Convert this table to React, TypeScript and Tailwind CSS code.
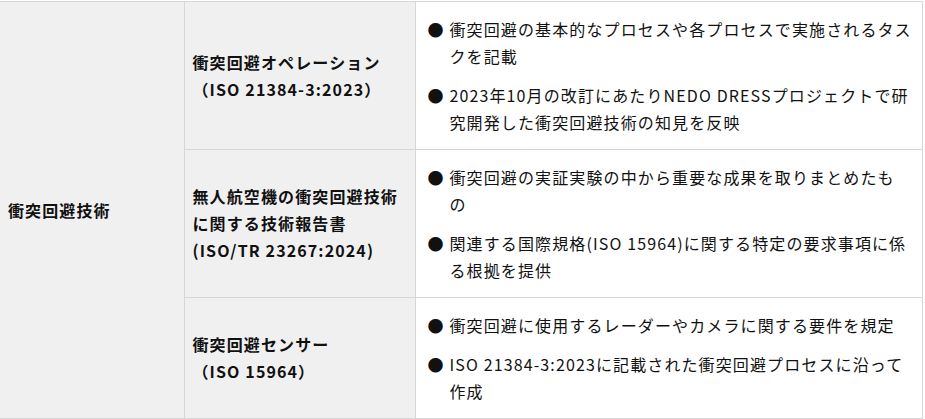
const rows = [
  {
    title: ["衝突回避オペレーション", "（ISO 21384-3:2023）"],
    items: [
      ["衝突回避の基本的なプロセスや各プロセスで実施されるタス", "クを記載"],
      ["2023年10月の改訂にあたりNEDO DRESSプロジェクトで研", "究開発した衝突回避技術の知見を反映"],
    ],
  },
  {
    title: ["無人航空機の衝突回避技術", "に関する技術報告書", "(ISO/TR 23267:2024)"],
    items: [
      ["衝突回避の実証実験の中から重要な成果を取りまとめたも", "の"],
      ["関連する国際規格(ISO 15964)に関する特定の要求事項に係", "る根拠を提供"],
    ],
  },
  {
    title: ["衝突回避センサー", "（ISO 15964）"],
    items: [
      ["衝突回避に使用するレーダーやカメラに関する要件を規定"],
      ["ISO 21384-3:2023に記載された衝突回避プロセスに沿って", "作成"],
    ],
  },
];

export default function App() {
  return (
    <div className="w-[925px] h-[419px] bg-white pt-px font-['Noto_Sans_CJK_JP',sans-serif] text-[16px] leading-[27px] tracking-[0.07em] text-[#111]">
      <table className="w-[922px] border-collapse table-fixed">
        <colgroup>
          <col className="w-[184px]" />
          <col className="w-[231px]" />
          <col className="w-[507px]" />
        </colgroup>
        <tbody>
          {rows.map((row, i) => (
            <tr key={i}>
              {i === 0 && (
                <th
                  rowSpan={3}
                  className="bg-[#f0f0f0] border-t border-b border-r border-[#d6d6d6] px-2 text-left align-middle font-bold"
                >
                  衝突回避技術
                </th>
              )}
              <th className="bg-[#f0f0f0] border border-[#d6d6d6] pl-2 pr-1 text-left align-middle font-bold">
                {row.title.map((t, j) => (
                  <div key={j} className="whitespace-nowrap">{t}</div>
                ))}
              </th>
              <td className="border border-[#d6d6d6] pl-3 pr-1 pt-[14px] pb-[13px] align-top">
                <ul className="flex flex-col gap-3">
                  {row.items.map((lines, j) => (
                    <li key={j} className="flex">
                      <span className="w-[22px] shrink-0 tracking-normal">●</span>
                      <span>
                        {lines.map((l, k) => (
                          <div key={k} className="whitespace-nowrap">{l}</div>
                        ))}
                      </span>
                    </li>
                  ))}
                </ul>
              </td>
            </tr>
          ))}
        </tbody>
      </table>
    </div>
  );
}
